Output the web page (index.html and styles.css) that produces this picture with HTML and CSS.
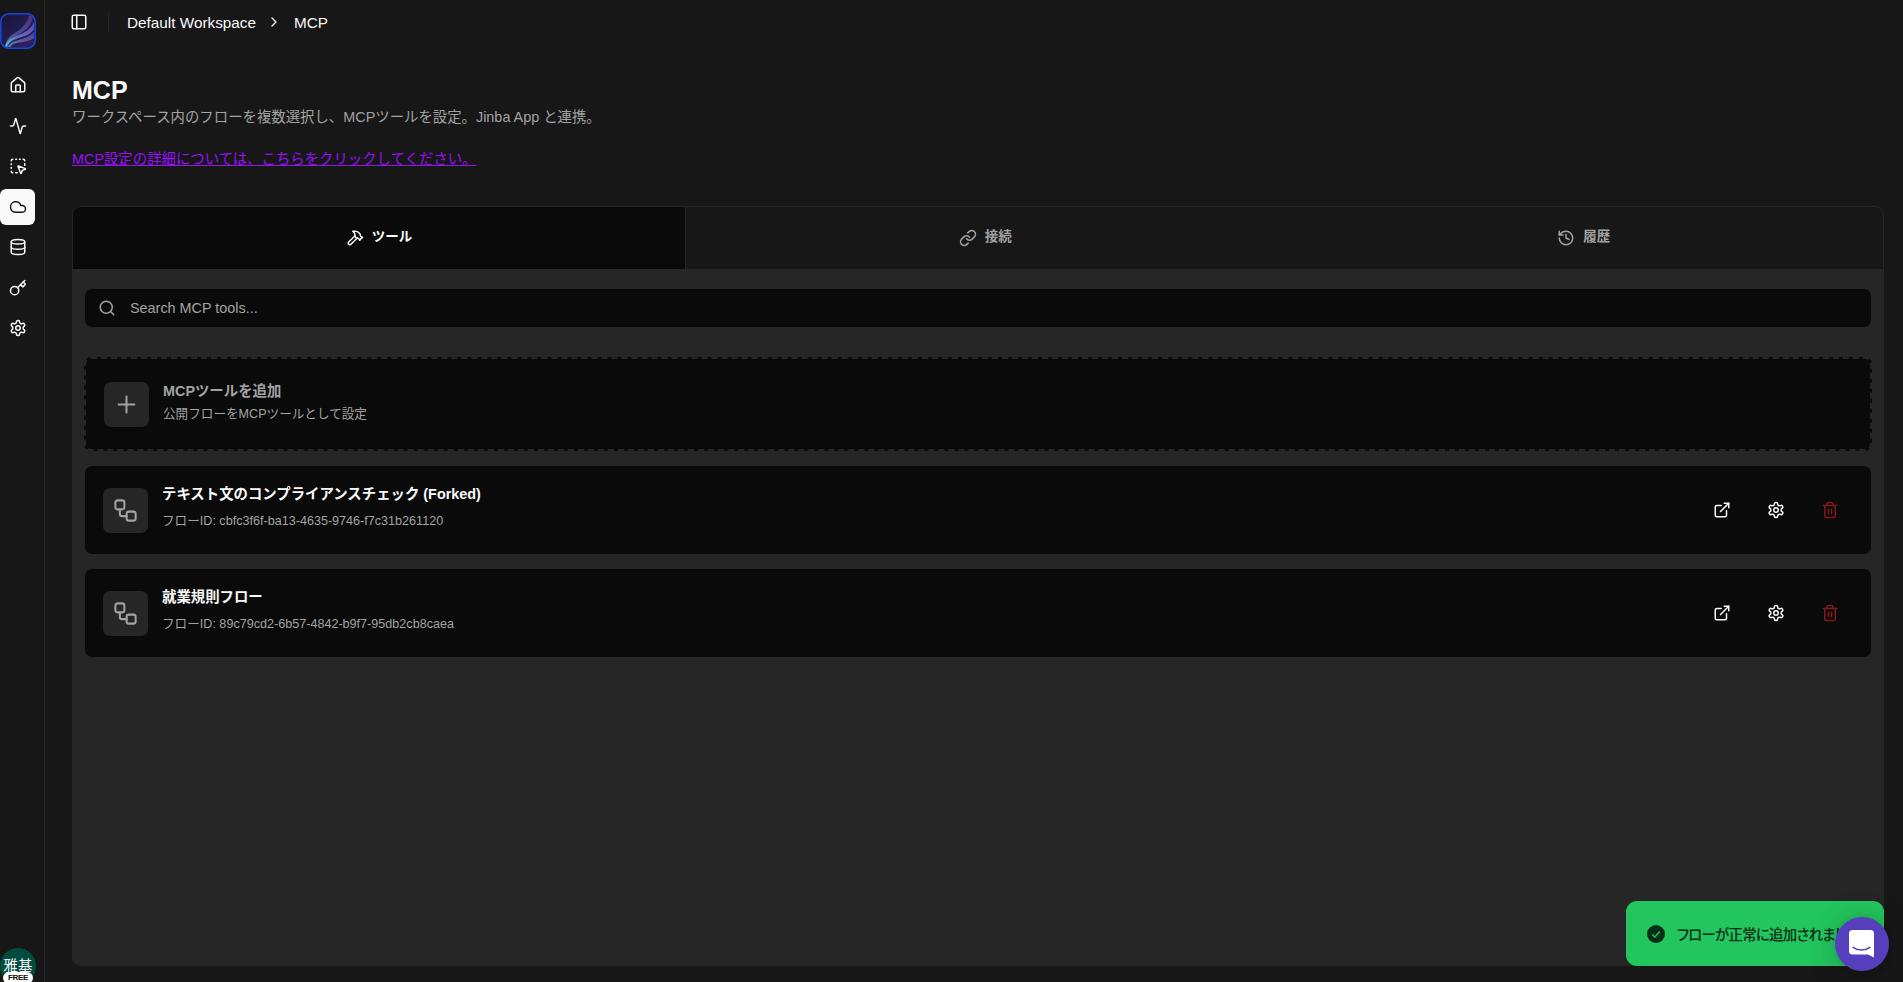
FILE: index.html
```html
<!DOCTYPE html>
<html lang="ja">
  <head>
    <meta charset="UTF-8">
    <title>MCP</title>
    <link rel="stylesheet" href="styles.css">
  </head>
  <body>
    <svg class="sprite">
      <symbol id="workflow" viewBox="0 0 24 24"><rect width="8" height="8" x="3" y="3" rx="2"/><path d="M7 11v4a2 2 0 0 0 2 2h4"/><rect width="8" height="8" x="13" y="13" rx="2"/></symbol>
      <symbol id="external" viewBox="0 0 24 24"><path d="M15 3h6v6"/><path d="M10 14 21 3"/><path d="M18 13v6a2 2 0 0 1-2 2H5a2 2 0 0 1-2-2V8a2 2 0 0 1 2-2h6"/></symbol>
      <symbol id="settings" viewBox="0 0 24 24"><path d="M12.22 2h-.44a2 2 0 0 0-2 2v.18a2 2 0 0 1-1 1.73l-.43.25a2 2 0 0 1-2 0l-.15-.08a2 2 0 0 0-2.73.73l-.22.38a2 2 0 0 0 .73 2.73l.15.1a2 2 0 0 1 1 1.72v.51a2 2 0 0 1-1 1.74l-.15.09a2 2 0 0 0-.73 2.73l.22.38a2 2 0 0 0 2.73.73l.15-.08a2 2 0 0 1 2 0l.43.25a2 2 0 0 1 1 1.73V20a2 2 0 0 0 2 2h.44a2 2 0 0 0 2-2v-.18a2 2 0 0 1 1-1.73l.43-.25a2 2 0 0 1 2 0l.15.08a2 2 0 0 0 2.73-.73l.22-.39a2 2 0 0 0-.73-2.73l-.15-.08a2 2 0 0 1-1-1.74v-.5a2 2 0 0 1 1-1.74l.15-.09a2 2 0 0 0 .73-2.73l-.22-.38a2 2 0 0 0-2.73-.73l-.15.08a2 2 0 0 1-2 0l-.43-.25a2 2 0 0 1-1-1.73V4a2 2 0 0 0-2-2z"/><circle cx="12" cy="12" r="3"/></symbol>
      <symbol id="trash" viewBox="0 0 24 24"><path d="M3 6h18"/><path d="M19 6v14c0 1-1 2-2 2H7c-1 0-2-1-2-2V6"/><path d="M8 6V4c0-1 1-2 2-2h4c1 0 2 1 2 2v2"/><path d="M10 11v6"/><path d="M14 11v6"/></symbol>
    </svg>

    <div class="app">
      <aside class="sidebar">
        <svg class="logo" viewBox="0 0 36 36">
          <defs>
            <linearGradient id="logo-bg" x1="0" y1="0" x2="1" y2="1"><stop offset="0" stop-color="#17163c"/><stop offset="1" stop-color="#32215f"/></linearGradient>
            <linearGradient id="logo-wave" x1="0" y1="1" x2="1" y2="0"><stop offset="0" stop-color="#5fd0dc"/><stop offset=".4" stop-color="#6c7fd0"/><stop offset="1" stop-color="#6a45b8"/></linearGradient>
          </defs>
          <rect x=".8" y=".8" width="34.4" height="34.4" rx="8" fill="url(#logo-bg)" stroke="#1848dc" stroke-width="1.5"/>
          <path d="M6 31C8 19 25 20 29 2L33 4C29 22 12 21 6 31Z" fill="url(#logo-wave)" opacity=".5"/>
          <path d="M5 33C9 20 27 25 34 9V16C27 27 12 22 7 34Z" fill="url(#logo-wave)" opacity=".9"/>
          <path d="M8 34C12 25 25 29 34 19V25C26 31 15 27 10 34Z" fill="url(#logo-wave)" opacity=".7"/>
        </svg>
        <nav class="nav">
          <a class="nav-item"><svg class="icon" viewBox="0 0 24 24"><path d="M15 21v-8a1 1 0 0 0-1-1h-4a1 1 0 0 0-1 1v8"/><path d="M3 10a2 2 0 0 1 .709-1.528l7-5.999a2 2 0 0 1 2.582 0l7 5.999A2 2 0 0 1 21 10v9a2 2 0 0 1-2 2H5a2 2 0 0 1-2-2z"/></svg></a>
          <a class="nav-item"><svg class="icon" viewBox="0 0 24 24"><path d="M22 12h-2.480a2 2 0 0 0-1.930 1.460l-2.350 8.360a.25.25 0 0 1-.480 0L9.240 2.180a.25.25 0 0 0-.480 0l-2.350 8.360A2 2 0 0 1 4.490 12H2"/></svg></a>
          <a class="nav-item"><svg class="icon" viewBox="0 0 24 24"><path d="M12.034 12.681a.498.498 0 0 1 .647-.647l9 3.500a.5.5 0 0 1-.033.943l-3.444 1.068a1 1 0 0 0-.660.660l-1.067 3.443a.5.5 0 0 1-.943.033z"/><path d="M5 3a2 2 0 0 0-2 2"/><path d="M19 3a2 2 0 0 1 2 2"/><path d="M5 21a2 2 0 0 1-2-2"/><path d="M9 3h1"/><path d="M9 21h2"/><path d="M14 3h1"/><path d="M3 9v1"/><path d="M21 9v2"/><path d="M3 14v1"/></svg></a>
          <a class="nav-item active"><svg class="icon" viewBox="0 0 24 24"><path d="M17.500 19H9a7 7 0 1 1 6.710-9h1.790a4.500 4.500 0 1 1 0 9Z"/></svg></a>
          <a class="nav-item"><svg class="icon" viewBox="0 0 24 24"><ellipse cx="12" cy="5" rx="9" ry="3"/><path d="M3 5v14a9 3 0 0 0 18 0V5"/><path d="M3 12a9 3 0 0 0 18 0"/></svg></a>
          <a class="nav-item"><svg class="icon" viewBox="0 0 24 24"><path d="m15.500 7.500 2.300 2.300a1 1 0 0 0 1.400 0l2.100-2.100a1 1 0 0 0 0-1.400L19 4"/><path d="m21 2-9.600 9.600"/><circle cx="7.500" cy="15.500" r="5.500"/></svg></a>
          <a class="nav-item"><svg class="icon"><use href="#settings"/></svg></a>
        </nav>
        <div class="user">
          <div class="avatar">雅基</div>
          <div class="plan">FREE</div>
        </div>
      </aside>

      <main class="main">
        <header class="topbar">
          <svg class="icon" viewBox="0 0 24 24"><rect width="18" height="18" x="3" y="3" rx="2"/><path d="M9 3v18"/></svg>
          <span class="divider"></span>
          <span class="crumb">Default Workspace</span>
          <svg class="icon chevron" viewBox="0 0 24 24"><path d="m9 18 6-6-6-6"/></svg>
          <span class="crumb">MCP</span>
        </header>

        <h1>MCP</h1>
        <p class="lead">ワークスペース内のフローを複数選択し、MCPツールを設定。Jinba App と連携。</p>
        <a class="doc-link" href="#">MCP設定の詳細については、こちらをクリックしてください。</a>

        <section class="panel">
          <div class="tabs">
            <button class="tab active"><svg class="icon" viewBox="0 0 24 24"><path d="m15 12-8.373 8.373a1 1 0 1 1-3-3L12 9"/><path d="m18 15 4-4"/><path d="m21.500 11.500-1.914-1.914A2 2 0 0 1 19 8.172V7l-2.260-2.260a6 6 0 0 0-4.202-1.756L9 2.960l.920.820A6.180 6.180 0 0 1 12 8.400V10l2 2h1.172a2 2 0 0 1 1.414.586L18.500 14.500"/></svg><span>ツール</span></button>
            <button class="tab"><svg class="icon" viewBox="0 0 24 24"><path d="M10 13a5 5 0 0 0 7.540.540l3-3a5 5 0 0 0-7.070-7.070l-1.720 1.710"/><path d="M14 11a5 5 0 0 0-7.540-.540l-3 3a5 5 0 0 0 7.070 7.070l1.710-1.710"/></svg><span>接続</span></button>
            <button class="tab"><svg class="icon" viewBox="0 0 24 24"><path d="M3 12a9 9 0 1 0 9-9 9.750 9.750 0 0 0-6.740 2.740L3 8"/><path d="M3 3v5h5"/><path d="M12 7v5l4 2"/></svg><span>履歴</span></button>
          </div>

          <div class="content">
            <label class="search">
              <svg class="icon" viewBox="0 0 24 24"><circle cx="11" cy="11" r="8"/><path d="m21 21-4.300-4.300"/></svg>
              <input type="text" placeholder="Search MCP tools...">
            </label>

            <div class="add-card">
              <div class="tile"><svg class="icon" viewBox="0 0 24 24"><path d="M5 12h14"/><path d="M12 5v14"/></svg></div>
              <div class="add-body">
                <div class="add-title">MCPツールを追加</div>
                <div class="add-text">公開フローをMCPツールとして設定</div>
              </div>
            </div>

            <div class="card">
              <div class="tile"><svg class="icon"><use href="#workflow"/></svg></div>
              <div class="card-body">
                <div class="card-title">テキスト文のコンプライアンスチェック (Forked)</div>
                <div class="card-id">フローID: cbfc3f6f-ba13-4635-9746-f7c31b261120</div>
              </div>
              <div class="actions">
                <svg class="icon"><use href="#external"/></svg>
                <svg class="icon"><use href="#settings"/></svg>
                <svg class="icon danger"><use href="#trash"/></svg>
              </div>
            </div>

            <div class="card">
              <div class="tile"><svg class="icon"><use href="#workflow"/></svg></div>
              <div class="card-body">
                <div class="card-title">就業規則フロー</div>
                <div class="card-id">フローID: 89c79cd2-6b57-4842-b9f7-95db2cb8caea</div>
              </div>
              <div class="actions">
                <svg class="icon"><use href="#external"/></svg>
                <svg class="icon"><use href="#settings"/></svg>
                <svg class="icon danger"><use href="#trash"/></svg>
              </div>
            </div>
          </div>
        </section>
      </main>
    </div>

    <div class="toast">
      <svg class="toast-icon" viewBox="0 0 18 18"><circle cx="9" cy="9" r="9" fill="#052e16"/><path d="m5.300 9.500 2.500 2.500 5-5.400" fill="none" stroke="#22c55e" stroke-width="1.400"/></svg>
      <span>フローが正常に追加されました</span>
    </div>
    <div class="chat">
      <svg class="chat-icon" viewBox="0 0 25 28"><path d="M3.500 0h18A3.500 3.500 0 0 1 25 3.500V27.500l-6-3H3.500A3.500 3.500 0 0 1 0 21V3.500A3.500 3.500 0 0 1 3.500 0Z" fill="#fff"/><path d="M4.200 17.300c4.800 3.700 11.800 3.700 16.600 0" fill="none" stroke="#563fbd" stroke-width="1.500" stroke-linecap="round"/></svg>
    </div>
  </body>
</html>
```

FILE: styles.css
```css
* {
  box-sizing: border-box;
}

body {
  margin: 0;
  height: 982px;
  overflow: hidden;
  background-color: #171717;
  color: #fafafa;
  font-family: "Liberation Sans", "Noto Sans CJK JP", sans-serif;
  font-size: 14.4px;
}

.sprite {
  display: none;
}

.icon {
  width: 18px;
  height: 18px;
  flex-shrink: 0;
  fill: none;
  stroke: currentColor;
  stroke-width: 2;
  stroke-linecap: round;
  stroke-linejoin: round;
}

.app {
  display: flex;
  height: 982px;
}

/* sidebar */
.sidebar {
  display: flex;
  flex-direction: column;
  width: 45px;
  padding-top: 13px;
  border-right: 1px solid #262626;
}

.logo {
  width: 36px;
  height: 36px;
}

.nav {
  display: flex;
  flex-direction: column;
  gap: 4.5px;
  margin-top: 18px;
}

.nav-item {
  display: flex;
  align-items: center;
  width: 35px;
  height: 36px;
  padding-left: 9px;
  border-radius: 6px;
}

.nav-item.active {
  background-color: #fafafa;
  color: #171717;
}

.user {
  display: flex;
  flex-direction: column;
  align-items: center;
  width: 36px;
  height: 34px;
  margin-top: auto;
}

.avatar {
  flex-shrink: 0;
  width: 36px;
  height: 36px;
  border-radius: 50%;
  background-color: #004d40;
  font-size: 14.4px;
  line-height: 36px;
  text-align: center;
}

.plan {
  flex-shrink: 0;
  width: 30px;
  height: 12px;
  margin-top: -12px;
  border-radius: 6px;
  background-color: #fff;
  color: #0a0a0a;
  font-size: 8px;
  font-weight: bold;
  letter-spacing: -0.3px;
  line-height: 12px;
  text-align: center;
}

/* main */
.main {
  display: flex;
  flex: 1;
  flex-direction: column;
  align-items: flex-start;
  padding: 0 19px 16px 27px;
}

.topbar {
  display: flex;
  align-items: center;
  height: 44px;
  margin-left: -2px;
  font-size: 15.3px;
}

.crumb {
  padding-top: 1px;
}

.divider {
  width: 1px;
  height: 18px;
  margin: 0 18px 0 20px;
  background-color: #262626;
}

.chevron {
  width: 16px;
  height: 16px;
  margin: 0 12px 0 10px;
}

h1 {
  margin: 32px 0 0;
  font-size: 25px;
  line-height: 28px;
}

.lead {
  margin: 2px 0 0;
  color: #a3a3a3;
  line-height: 22px;
}

.doc-link {
  margin-top: 20px;
  color: #9810fa;
  line-height: 22px;
}

.panel {
  display: flex;
  flex: 1;
  flex-direction: column;
  width: 100%;
  margin-top: 36px;
  overflow: hidden;
  border: 1px solid #262626;
  border-radius: 9px;
  background-color: #262626;
}

.tabs {
  display: flex;
  height: 62px;
  background-color: #171717;
}

.tab {
  display: flex;
  flex: 1 1 auto;
  align-items: center;
  justify-content: center;
  gap: 8px;
  padding: 0;
  border: none;
  background: none;
  color: #a3a3a3;
  font-family: inherit;
  font-size: 13.5px;
  font-weight: bold;
}

.tab span {
  margin-bottom: 6px;
}

.tab.active {
  border-right: 1px solid #262626;
  background-color: #0a0a0a;
  color: #fafafa;
}

.content {
  padding: 20px 12px;
}

.search {
  display: flex;
  align-items: center;
  gap: 14px;
  height: 38px;
  padding-left: 13px;
  border-radius: 7px;
  background-color: #0a0a0a;
  color: #a3a3a3;
}

.search input {
  flex: 1;
  padding: 0;
  border: none;
  background: none;
  font-family: inherit;
  font-size: 14.4px;
}

.search input::placeholder {
  color: #a3a3a3;
}

.add-card,
.card {
  display: flex;
  align-items: center;
  gap: 14px;
  border-radius: 7px;
  background-color: #0a0a0a;
}

.add-card {
  height: 94px;
  margin: 30px -1px 15px;
  padding-left: 18px;
  border: 2px dashed #262626;
  color: #a3a3a3;
}

.card {
  height: 88px;
  margin-bottom: 15px;
  padding: 0 32px 0 18px;
}

.tile {
  display: flex;
  align-items: center;
  justify-content: center;
  width: 45px;
  height: 45px;
  border-radius: 7px;
  background-color: #262626;
  color: #a3a3a3;
}

.tile .icon {
  width: 27px;
  height: 27px;
  stroke-width: 1.8;
}

.add-body {
  padding-bottom: 4px;
}

.add-title {
  font-weight: bold;
  line-height: 23px;
}

.add-text {
  font-size: 12.6px;
  line-height: 22px;
}

.card-body {
  flex: 1;
  padding-bottom: 3px;
}

.card-title {
  font-weight: bold;
  line-height: 25px;
}

.card-id {
  color: #a3a3a3;
  font-size: 12.6px;
  line-height: 28px;
}

.actions {
  display: flex;
  gap: 36px;
}

.danger {
  color: #82181a;
}

/* overlays */
.toast {
  position: absolute;
  right: 19px;
  bottom: 16px;
  display: flex;
  align-items: center;
  gap: 12px;
  width: 258px;
  height: 65px;
  padding-left: 21px;
  overflow: hidden;
  border-radius: 11px;
  background-color: #22c55e;
  color: #052e16;
  font-family: "Noto Sans CJK JP", sans-serif;
  font-feature-settings: "palt";
  font-weight: 500;
  letter-spacing: -0.7px;
  white-space: nowrap;
}

.toast-icon {
  flex-shrink: 0;
  width: 18px;
  height: 18px;
}

.chat {
  position: absolute;
  right: 14px;
  bottom: 11px;
  display: flex;
  align-items: center;
  justify-content: center;
  width: 54px;
  height: 54px;
  padding-right: 1px;
  border-radius: 50%;
  background-color: #563fbd;
  box-shadow: 0 1px 6px rgba(0, 0, 0, 0.1), 0 2px 32px rgba(0, 0, 0, 0.2);
}

.chat-icon {
  width: 25px;
  height: 28px;
}
```
